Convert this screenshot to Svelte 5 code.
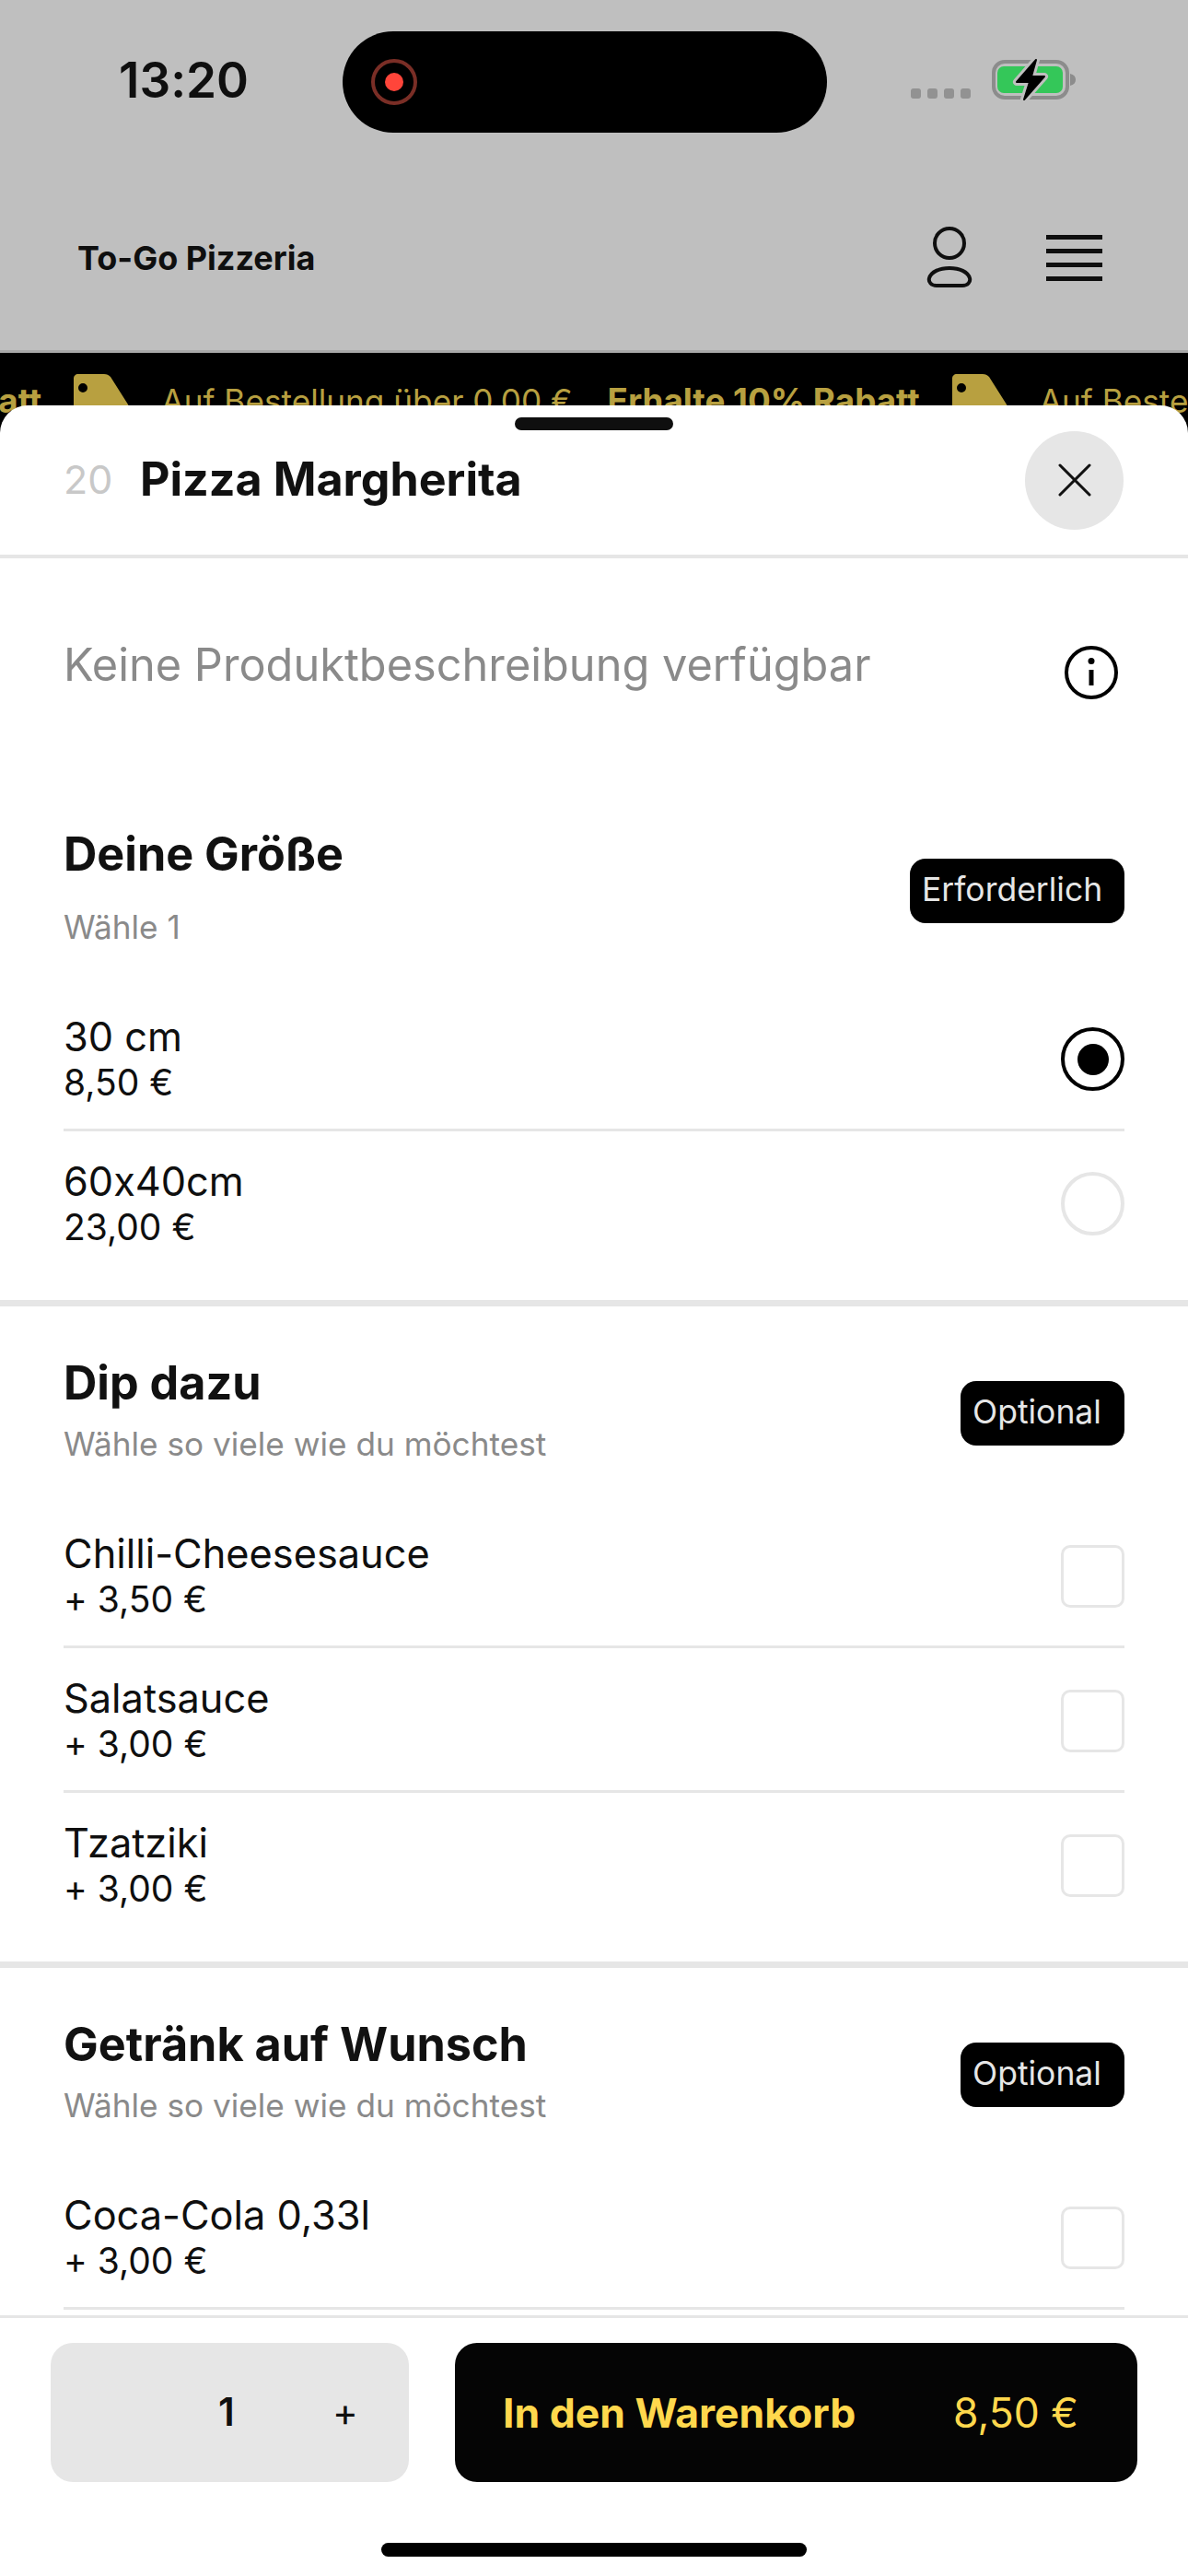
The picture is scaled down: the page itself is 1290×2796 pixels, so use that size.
<script>
	const promos = [0, 1, 2];
	const sections = [
		{
			title: "Deine Größe",
			hint: "Wähle 1",
			badge: "Erforderlich",
			type: "radio",
			first: true,
			items: [
				{ name: "30 cm", price: "8,50 €", checked: true },
				{ name: "60x40cm", price: "23,00 €" }
			]
		},
		{
			title: "Dip dazu",
			hint: "Wähle so viele wie du möchtest",
			badge: "Optional",
			type: "check",
			items: [
				{ name: "Chilli-Cheesesauce", price: "+ 3,50 €" },
				{ name: "Salatsauce", price: "+ 3,00 €" },
				{ name: "Tzatziki", price: "+ 3,00 €" }
			]
		},
		{
			title: "Getränk auf Wunsch",
			hint: "Wähle so viele wie du möchtest",
			badge: "Optional",
			type: "check",
			items: [
				{ name: "Coca-Cola 0,33l", price: "+ 3,00 €" },
				{ name: "Fanta 0,33l", price: "+ 3,00 €" }
			]
		}
	];
</script>

<div class="page">
	<div class="status">
		<span class="time">13:20</span>
		<div class="island">
			<span class="rec"><i></i></span>
		</div>
		<div class="dots"><i></i><i></i><i></i><i></i></div>
		<svg class="battery" width="92" height="50" viewBox="0 0 92 50">
			<rect x="2" y="7" width="80" height="39" rx="12" fill="none" stroke="#8c8c8c" stroke-width="4" />
			<rect x="6" y="12" width="71" height="29" rx="7" fill="#34c759" />
			<path d="M85 20c4 1 6 3 6 6.500s-2 5.500-6 6.500z" fill="#8c8c8c" />
			<path
				d="M48 5 27 29h14l-6 19 22-25H43z"
				fill="#000"
				stroke="#bfbfbf"
				stroke-width="8"
				stroke-linejoin="round"
				paint-order="stroke"
			/>
			<path d="M48 5 27 29h14l-6 19 22-25H43z" fill="#000" stroke="#000" stroke-width="2" stroke-linejoin="round" />
		</svg>
	</div>

	<div class="nav">
		<span class="brand">To-Go Pizzeria</span>
		<svg class="person" width="54" height="72" viewBox="0 0 54 72" fill="none" stroke="#0f0f0f" stroke-width="4">
			<circle cx="27" cy="20" r="16" />
			<path d="M13 66h28c6 0 9-4 8-8-2-7-11-11-22-11S7 51 5 58c-1 4 2 8 8 8z" />
		</svg>
		<div class="burger"><i></i><i></i><i></i><i></i></div>
	</div>

	<div class="banner">
		<div class="track">
			{#each promos as p (p)}
				<svg class="tag" width="60" height="60" viewBox="0 0 60 60">
					<path
						fill-rule="evenodd"
						d="M5 0h28c3 0 5 1 7 3l19 30c2 3 1 6-1 8L40 60H6c-3 0-6-3-6-6V5c0-3 2-5 5-5zm5 10a5 5 0 1 0 0 10 5 5 0 0 0 0-10z"
						fill="#b8a040"
					/>
				</svg>
				<span class="promo">Auf Bestellung über 0,00 €</span>
				<strong class="promo">Erhalte 10% Rabatt</strong>
			{/each}
		</div>
	</div>

	<div class="sheet">
		<span class="handle"></span>
		<header class="sheet-head">
			<span class="num">20</span>
			<h1>Pizza Margherita</h1>
			<button class="close" aria-label="Schließen">
				<svg width="36" height="36" viewBox="0 0 36 36" stroke="#111" stroke-width="3" stroke-linecap="round">
					<path d="M2 2l32 32M34 2 2 34" />
				</svg>
			</button>
		</header>

		<div class="body">
			<div class="desc">
				<p>Keine Produktbeschreibung verfügbar</p>
				<svg width="60" height="60" viewBox="0 0 60 60" fill="none" stroke="#000" stroke-width="4">
					<circle cx="30" cy="30" r="27" />
					<path d="M30 27v17" stroke-width="5" />
					<circle cx="30" cy="17.500" r="3.500" fill="#000" stroke="none" />
				</svg>
			</div>

			{#each sections as s, i (s.title)}
				{#if i > 0}<div class="rule"></div>{/if}
				<section>
					<div class="sec-head">
						<div>
							<h2>{s.title}</h2>
							<p class="hint" class:wide={s.first}>{s.hint}</p>
						</div>
						<span class="badge" class:req={s.first}>{s.badge}</span>
					</div>
					{#each s.items as item (item.name)}
						<div class="row">
							<div>
								<div class="name">{item.name}</div>
								<div class="price">{item.price}</div>
							</div>
							{#if s.type === "radio"}
								<span class="radio" class:on={item.checked}></span>
							{:else}
								<span class="check"></span>
							{/if}
						</div>
					{/each}
				</section>
			{/each}
		</div>

		<footer>
			<div class="actions">
				<div class="qty">
					<span class="count">1</span>
					<span class="plus">+</span>
				</div>
				<button class="add">
					<strong>In den Warenkorb</strong>
					<span>8,50 €</span>
				</button>
			</div>
			<span class="home"></span>
		</footer>
	</div>
</div>

<style>
	:global(body) {
		margin: 0;
		font-family: Inter, "Liberation Sans", sans-serif;
		font-feature-settings: "calt" 0;
	}

	.page {
		position: relative;
		width: 1290px;
		height: 2796px;
		overflow: hidden;
		background: #bfbfbf;
		color: #0f0f0f;
	}

	.status {
		display: flex;
		height: 110px;
		padding-top: 34px;
	}
	.time {
		width: 372px;
		padding-left: 129px;
		box-sizing: border-box;
		font-size: 53px;
		font-weight: 600;
		line-height: 106px;
	}
	.island {
		display: flex;
		align-items: center;
		width: 526px;
		height: 110px;
		padding-left: 31px;
		box-sizing: border-box;
		background: #000;
		border-radius: 55px;
	}
	.rec {
		display: flex;
		align-items: center;
		justify-content: center;
		width: 50px;
		height: 50px;
		border: 4px solid #7a2e26;
		box-sizing: border-box;
		border-radius: 50%;
	}
	.rec i {
		width: 20px;
		height: 20px;
		background: #ff453a;
		border-radius: 50%;
	}
	.dots {
		display: flex;
		gap: 7px;
		height: 11px;
		margin: 62px 0 0 91px;
	}
	.dots i {
		width: 11px;
		height: 11px;
		background: #929292;
		border-radius: 3px;
	}
	.battery {
		margin: 26px 0 0 23px;
	}

	.nav {
		display: flex;
		align-items: center;
		height: 200px;
		padding: 36px 93px 0 84px;
	}
	.brand {
		flex: 1;
		font-size: 36px;
		font-weight: 700;
	}
	.person {
		margin-right: 78px;
	}
	.burger {
		display: flex;
		flex-direction: column;
		gap: 10px;
		width: 61px;
	}
	.burger i {
		height: 5px;
		background: #0f0f0f;
	}

	.banner {
		height: 413px;
		background: #000;
		border-top: 3px solid #a9a9a9;
		overflow: hidden;
	}
	.track {
		display: flex;
		align-items: flex-start;
		width: max-content;
		margin-left: -873px;
		padding-top: 23px;
	}
	.tag {
		margin-right: 35px;
		flex: none;
	}
	.promo {
		margin-right: 38px;
		color: #b8a040;
		font-size: 35.200px;
		line-height: 44px;
		white-space: nowrap;
		margin-top: 7px;
	}
	strong.promo {
		margin-right: 35px;
		font-size: 36.800px;
	}

	.sheet {
		position: absolute;
		top: 440px;
		left: 0;
		right: 0;
		bottom: 0;
		display: flex;
		flex-direction: column;
		background: #fff;
		border-radius: 30px 30px 0 0;
		overflow: hidden;
	}
	.handle {
		position: absolute;
		top: 13px;
		left: 559px;
		width: 172px;
		height: 14px;
		background: #0f0f0f;
		border-radius: 7px;
	}
	.sheet-head {
		display: flex;
		align-items: center;
		flex: none;
		height: 162px;
		padding: 0 70px 0 69px;
		border-bottom: 4px solid #e6e6e6;
	}
	.num {
		width: 83px;
		padding-bottom: 3px;
		color: #c8c8c8;
		font-size: 43px;
	}
	h1 {
		flex: 1;
		margin: 0 0 3px;
		font-size: 50.200px;
		font-weight: 700;
		color: #111;
	}
	.close {
		display: flex;
		align-items: center;
		justify-content: center;
		width: 107px;
		height: 107px;
		padding: 0;
		background: #e6e6e6;
		border: 0;
		border-radius: 50%;
	}

	.body {
		flex: 1;
		min-height: 0;
		overflow: hidden;
	}
	.desc {
		display: flex;
		justify-content: space-between;
		align-items: flex-start;
		padding: 90px 75px 84px 69px;
	}
	.desc p {
		margin: 0;
		color: #8a8a8a;
		font-size: 48.700px;
		line-height: 52px;
	}
	.desc svg {
		margin-top: 4px;
	}

	section {
		padding: 0 69px 26px 69px;
	}
	.rule {
		height: 7px;
		background: #e6e6e6;
	}
	.sec-head {
		display: flex;
		justify-content: space-between;
		align-items: center;
		padding: 58px 0 40px;
	}
	h2 {
		margin: 0;
		color: #111;
		font-size: 50.300px;
		font-weight: 700;
		line-height: 50px;
	}
	.hint {
		margin: 16px 0 0;
		color: #8a8a8a;
		font-size: 35.200px;
		line-height: 50px;
	}
	.hint.wide {
		margin-top: 29px;
	}
	.badge {
		box-sizing: border-box;
		width: 178px;
		height: 70px;
		padding-left: 13px;
		background: #000;
		color: #e6e6e6;
		font-size: 35.500px;
		line-height: 68px;
		border-radius: 17px;
	}
	.badge.req {
		width: 233px;
	}

	.row {
		display: flex;
		justify-content: space-between;
		align-items: center;
		box-sizing: border-box;
		height: 157px;
		padding-top: 3px;
		border-bottom: 3px solid #e6e6e6;
	}
	section .row:last-child {
		border-bottom-color: transparent;
	}
	section:last-child .row:last-child {
		border-bottom-color: #e6e6e6;
	}
	.name {
		font-size: 43.300px;
		line-height: 50px;
	}
	.price {
		font-size: 39px;
		line-height: 50px;
	}
	.radio {
		display: flex;
		align-items: center;
		justify-content: center;
		box-sizing: border-box;
		width: 69px;
		height: 69px;
		border: 4px solid #e6e6e6;
		border-radius: 50%;
	}
	.radio.on {
		border-color: #000;
	}
	.radio.on::after {
		content: "";
		width: 34px;
		height: 34px;
		background: #000;
		border-radius: 50%;
	}
	.check {
		box-sizing: border-box;
		width: 69px;
		height: 68px;
		border: 3px solid #e6e6e6;
		border-radius: 10px;
	}

	footer {
		display: flex;
		flex-direction: column;
		align-items: center;
		flex: none;
		height: 283px;
		box-sizing: border-box;
		padding-top: 27px;
		border-top: 3px solid #e6e6e6;
		background: #fff;
	}
	.actions {
		display: flex;
		gap: 50px;
		width: 1180px;
	}
	.qty {
		position: relative;
		width: 389px;
		height: 151px;
		background: #e6e6e6;
		border-radius: 24px;
	}
	.count {
		position: absolute;
		left: 191px;
		top: 50px;
		transform: translateX(-50%);
		font-size: 42px;
		font-weight: 600;
		line-height: 50px;
	}
	.plus {
		position: absolute;
		left: 320px;
		top: 50px;
		transform: translateX(-50%);
		font-size: 42px;
		line-height: 50px;
	}
	.add {
		display: flex;
		justify-content: space-between;
		align-items: center;
		box-sizing: border-box;
		width: 741px;
		height: 151px;
		padding: 0 64px 0 52px;
		background: #050505;
		color: #ffd84d;
		border: 0;
		border-radius: 24px;
		font: inherit;
		font-size: 44.500px;
	}
	.add strong {
		font-weight: 700;
	}
	.home {
		width: 462px;
		height: 15px;
		margin-top: 66px;
		background: #000;
		border-radius: 8px;
	}
</style>
